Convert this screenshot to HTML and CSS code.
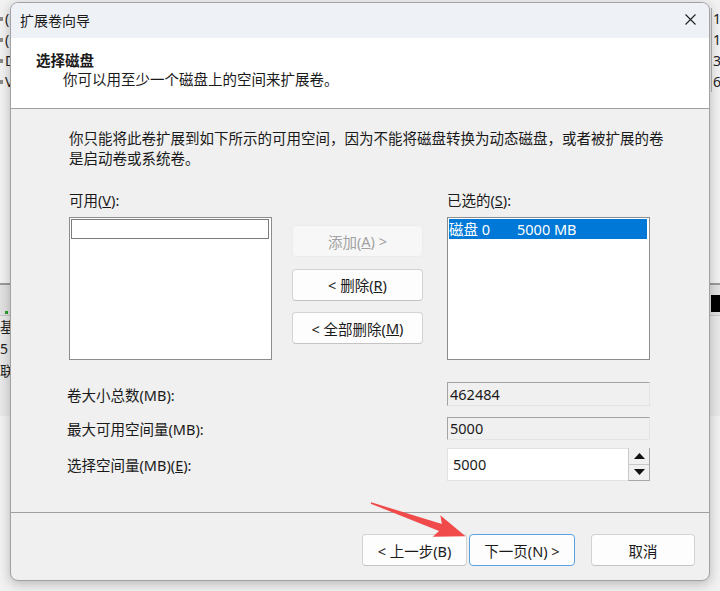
FILE: index.html
```html
<!DOCTYPE html>
<html lang="zh-CN">
<head>
<meta charset="utf-8">
<title>扩展卷向导</title>
<link rel="stylesheet" href="styles.css">
</head>
<body>
<div class="desktop">
  <div class="bgwin">
    <div class="bg-list">
      <div class="bg-row"><span class="bl"><i class="dot"></i>(C:)</span><span class="br">1</span></div>
      <div class="bg-row"><span class="bl"><i class="dot"></i>(E:)</span><span class="br">1</span></div>
      <div class="bg-row"><span class="bl"><i class="dot"></i>DVD</span><span class="br">3</span></div>
      <div class="bg-row"><span class="bl"><i class="dot"></i>Vol</span><span class="br">6</span></div>
    </div>
    <div class="bg-graph">
      <div class="bg-band"><span class="bg-green"></span><span class="bg-black"></span></div>
      <div class="bg-disk"><div>基</div><div>5</div><div>联</div></div>
    </div>
  </div>

  <div class="dialog">
    <div class="titlebar">
      <span class="title">扩展卷向导</span>
      <svg class="close" width="11" height="11" viewBox="0 0 11 11"><path d="M0.5 0.5L10.5 10.5M10.5 0.5L0.5 10.5" stroke="#1f1f1f" stroke-width="1.1" fill="none"/></svg>
    </div>
    <div class="header">
      <div class="h-title">选择磁盘</div>
      <div class="h-sub">你可以用至少一个磁盘上的空间来扩展卷。</div>
    </div>
    <div class="body">
      <p class="intro">你只能将此卷扩展到如下所示的可用空间，因为不能将磁盘转换为动态磁盘，或者被扩展的卷是启动卷或系统卷。</p>
      <div class="picker">
        <div class="col">
          <div class="lbl">可用(<u>V</u>):</div>
          <div class="listbox"><div class="item focus"></div></div>
        </div>
        <div class="btncol">
          <button class="btn disabled" disabled>添加(<u>A</u>) &gt;</button>
          <button class="btn">&lt; 删除(<u>R</u>)</button>
          <button class="btn">&lt; 全部删除(<u>M</u>)</button>
        </div>
        <div class="col">
          <div class="lbl">已选的(<u>S</u>):</div>
          <div class="listbox"><div class="item sel"><span class="c1">磁盘 0</span><span>5000 MB</span></div></div>
        </div>
      </div>
      <div class="fields">
        <div class="frow r1"><span class="fl">卷大小总数(MB):</span><div class="ro">462484</div></div>
        <div class="frow r2"><span class="fl">最大可用空间量(MB):</span><div class="ro">5000</div></div>
        <div class="frow r3"><span class="fl">选择空间量(MB)(<u>E</u>):</span>
          <div class="spin">
            <div class="spin-val">5000</div>
            <div class="spin-btns">
              <div class="sb"><svg width="11" height="6" viewBox="0 0 11 6"><path d="M0 6L5.5 0L11 6Z" fill="#111"/></svg></div>
              <div class="sb"><svg width="11" height="6" viewBox="0 0 11 6"><path d="M0 0L5.5 6L11 0Z" fill="#111"/></svg></div>
            </div>
          </div>
        </div>
      </div>
    </div>
    <div class="footer">
      <button class="btn fbtn">&lt; 上一步(B)</button>
      <button class="btn fbtn next">下一页(N) &gt;</button>
      <button class="btn fbtn cancel">取消</button>
    </div>
  </div>

  <svg class="arrow" width="720" height="591" viewBox="0 0 720 591">
    <polygon points="371.2,502.3 441.9,524 440.3,515.2 465.5,536.3 432.8,536.8 439.1,531 370.8,503.7" fill="#f04a4a"/>
  </svg>
</div>
</body>
</html>
```

FILE: styles.css
```css
* { box-sizing: border-box; }
html, body { margin: 0; padding: 0; }
body {
  width: 720px;
  height: 591px;
  overflow: hidden;
  font-family: "Noto Sans", "Noto Sans CJK SC", sans-serif;
  font-size: 14.5px;
  color: #1a1a1a;
  background: #e6e6e6;
}
.desktop {
  position: relative;
  width: 720px;
  height: 591px;
  overflow: hidden;
}

/* background window */
.bgwin {
  position: absolute;
  inset: 0;
  background: #f2f2f2;
  font-size: 14px;
  color: #222;
}
.bg-list { padding-top: 8px; }
.bg-row {
  display: flex;
  justify-content: space-between;
  height: 21px;
  line-height: 21px;
}
.bl { display: flex; align-items: center; width: 10px; overflow: hidden; white-space: nowrap; }
.dot { display: inline-block; flex: none; width: 3px; height: 4px; background: #8a8a8a; margin-right: 2px; }
.br { width: 9px; overflow: hidden; padding-left: 1px; border-left: 1px solid #b5b5b5; }
.bg-graph {
  margin-top: 191px;
  border-top: 2px solid #9a9a9a;
}
.bg-band {
  height: 31px;
  background: #e2e2e2;
  display: flex;
  justify-content: space-between;
  align-items: flex-end;
  border-bottom: 1px solid #c8c8c8;
}
.bg-green { width: 3px; height: 3px; background: #2aa02a; margin: 0 0 1px 5px; }
.bg-black { width: 9px; height: 17px; background: #000; margin-bottom: 3px; }
.bg-disk {
  line-height: 22px;
  background: #e9e9e9;
  height: 100px;
}

/* dialog */
.dialog {
  position: absolute;
  left: 10px;
  top: 2px;
  width: 700px;
  height: 579px;
  border: 1px solid #a2a2a2;
  border-radius: 8px;
  overflow: hidden;
  background: #f0f0f0;
  box-shadow: 0 3px 12px rgba(0, 0, 0, 0.25);
  display: flex;
  flex-direction: column;
}
.titlebar {
  height: 35px;
  flex: none;
  background: #eef2f7;
  display: flex;
  align-items: center;
  justify-content: space-between;
  padding: 0 13px 2px 9px;
  font-size: 14px;
}
.close { display: block; }
.header {
  height: 71px;
  flex: none;
  background: #fff;
  border-bottom: 1px solid #a0a0a0;
  padding: 13px 0 0 25px;
}
.h-title { font-weight: 700; line-height: 19px; }
.h-sub { line-height: 19px; padding-left: 27px; }

.body {
  flex: 1;
  padding: 19px 0 0 58px;
}
.intro {
  margin: 0;
  width: 600px;
  line-height: 20px;
}
.picker {
  display: flex;
  margin-top: 22px;
}
.col { width: 203px; }
.lbl { height: 20px; line-height: 20px; margin-bottom: 7px; }
.listbox {
  height: 143px;
  background: #fff;
  border: 1px solid #8c8c8c;
  padding: 1px;
}
.item { height: 20px; line-height: 20px; }
.item.focus { border: 1px solid #7c7c7c; margin-right: 1px; }
.item.sel {
  background: #0078d7;
  color: #fff;
  display: flex;
  margin-right: 1px;
}
.c1 { width: 68px; }

.btncol {
  width: 131px;
  margin: 35px 24px 0 20px;
  display: flex;
  flex-direction: column;
  gap: 11.5px;
}
.btn {
  height: 32px;
  background: #fdfdfd;
  border: 1px solid #d3d3d3;
  border-bottom-color: #c4c4c4;
  border-radius: 4px;
  font: inherit;
  color: #1a1a1a;
  padding: 0;
  display: flex;
  align-items: center;
  justify-content: center;
}
.btn.disabled {
  background: #f7f7f7;
  border-color: #ececec;
  color: #a2a2a2;
}

.fields { margin: 22px 0 0 -2px; }
.frow { display: flex; align-items: center; }
.fl { width: 380px; }
.r1 { margin-bottom: 11px; }
.r2 { margin-bottom: 8px; }
.ro {
  width: 203px;
  height: 24px;
  border: 1px solid;
  border-color: #a3a3a3 #e4e4e4 #e4e4e4 #a3a3a3;
  padding-left: 2px;
  line-height: 22px;
}
.r2 .ro { height: 23px; line-height: 21px; }
.spin {
  width: 203px;
  height: 33px;
  display: flex;
  background: #fff;
  border: 1px solid #e2e2e2;
}
.spin-val { flex: 1; padding-left: 5px; line-height: 31px; }
.spin-btns {
  width: 22px;
  display: flex;
  flex-direction: column;
  border-left: 1px solid #c8c8c8;
  border-right: 1px solid #a8a8a8;
  border-bottom: 1px solid #a8a8a8;
  margin: -1px -1px -1px 0;
}
.sb {
  flex: 1;
  background: #f0f0f0;
  display: flex;
  align-items: center;
  justify-content: center;
}
.sb + .sb { border-top: 1px solid #c8c8c8; }

.footer {
  height: 68px;
  flex: none;
  border-top: 1px solid #a0a0a0;
  display: flex;
  justify-content: flex-end;
  padding: 21px 14px 0 0;
}
.fbtn { width: 105px; }
.next { width: 106px; margin-left: 2px; border-color: #5aa2e2; }
.cancel { width: 104px; margin-left: 16px; }

.arrow {
  position: absolute;
  left: 0;
  top: 0;
  pointer-events: none;
}
```
